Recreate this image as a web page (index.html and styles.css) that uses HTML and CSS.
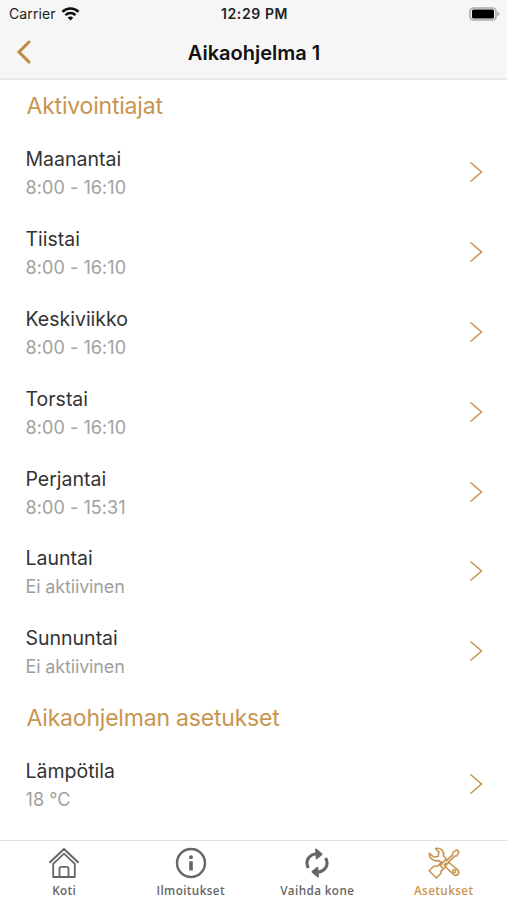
FILE: index.html
```html
<!DOCTYPE html>
<html lang="fi">
<head>
  <meta charset="UTF-8" />
  <meta name="viewport" content="width=device-width, initial-scale=1.0"/>
  <title>Aikaohjelma 1</title>
  <link rel="stylesheet" href="styles.css">
</head>
<body>
  <svg width="0" height="0" class="defs">
    <symbol id="chevron" viewBox="0 0 14 22">
      <path d="M1.5 1.5 L12.5 11 L1.5 20.5" fill="none" stroke="currentColor" stroke-width="1.6"/>
    </symbol>
  </svg>

  <header class="header">
    <div class="status-bar">
      <div class="carrier">
        <span>Carrier</span>
        <svg width="19" height="14" viewBox="0 0 18 14" fill="none" stroke="#111" stroke-width="2.6">
          <path d="M1 4.8 C5.3 .3 12.7 .3 17 4.8"/>
          <path d="M4 8.1 C6.7 5.3 11.3 5.3 14 8.1"/>
          <path d="M9 13.6 L6.2 10.7 C7.8 9.2 10.2 9.2 11.8 10.7 Z" fill="#111" stroke="none"/>
        </svg>
      </div>
      <span class="clock">12:29 PM</span>
      <svg class="battery" width="31" height="14" viewBox="0 0 31 14">
        <rect x="1" y="1" width="26" height="12" rx="3.6" fill="#f6f6f6" stroke="#aaa" stroke-width="1.6"/>
        <rect x="3" y="2.5" width="22" height="9" rx="1.5" fill="#000"/>
        <path d="M28.4 4.7 C31.2 5.8 31.2 8.2 28.4 9.3 Z" fill="#aaa"/>
      </svg>
    </div>
    <div class="nav-bar">
      <svg class="back" width="16" height="26" viewBox="0 0 16 26">
        <path d="M13 3 L3 13 L13 23" fill="none" stroke="currentColor" stroke-width="3" stroke-linecap="round"/>
      </svg>
      <h1>Aikaohjelma 1</h1>
    </div>
  </header>

  <main class="content">
    <h2>Aktivointiajat</h2>
    <ul class="list">
      <li class="row">
        <div><p class="name">Maanantai</p><p class="value">8:00 - 16:10</p></div>
        <svg class="chevron"><use href="#chevron"/></svg>
      </li>
      <li class="row">
        <div><p class="name">Tiistai</p><p class="value">8:00 - 16:10</p></div>
        <svg class="chevron"><use href="#chevron"/></svg>
      </li>
      <li class="row">
        <div><p class="name">Keskiviikko</p><p class="value">8:00 - 16:10</p></div>
        <svg class="chevron"><use href="#chevron"/></svg>
      </li>
      <li class="row">
        <div><p class="name">Torstai</p><p class="value">8:00 - 16:10</p></div>
        <svg class="chevron"><use href="#chevron"/></svg>
      </li>
      <li class="row">
        <div><p class="name">Perjantai</p><p class="value">8:00 - 15:31</p></div>
        <svg class="chevron"><use href="#chevron"/></svg>
      </li>
      <li class="row">
        <div><p class="name">Launtai</p><p class="value inactive">Ei aktiivinen</p></div>
        <svg class="chevron"><use href="#chevron"/></svg>
      </li>
      <li class="row">
        <div><p class="name">Sunnuntai</p><p class="value inactive">Ei aktiivinen</p></div>
        <svg class="chevron"><use href="#chevron"/></svg>
      </li>
    </ul>

    <h2>Aikaohjelman asetukset</h2>
    <ul class="list">
      <li class="row">
        <div><p class="name">Lämpötila</p><p class="value">18 °C</p></div>
        <svg class="chevron"><use href="#chevron"/></svg>
      </li>
    </ul>
  </main>

  <nav class="tab-bar">
    <a class="tab">
      <svg width="32" height="32" viewBox="0 0 32 32" fill="none" stroke="currentColor" stroke-width="1.8" stroke-linejoin="round">
        <path d="M1.5 15.7 L16 2 L30.5 15.7" stroke-width="2"/>
        <path d="M5.2 16.8 L16 6.6 L26.8 16.8 V30 H5.2 Z"/>
        <path d="M11.5 30 V21.5 Q11.5 19.8 13.2 19.8 H18.8 Q20.5 19.8 20.5 21.5 V30"/>
      </svg>
      <span>Koti</span>
    </a>
    <a class="tab">
      <svg width="32" height="32" viewBox="0 0 32 32">
        <circle cx="16" cy="16" r="14" fill="none" stroke="currentColor" stroke-width="2.4"/>
        <circle cx="16" cy="10.3" r="2" fill="currentColor"/>
        <path d="M16 14.2 V23.5" stroke="currentColor" stroke-width="3.6"/>
      </svg>
      <span>Ilmoitukset</span>
    </a>
    <a class="tab">
      <svg width="32" height="32" viewBox="0 0 32 32" fill="none" stroke="currentColor" stroke-width="3.1" stroke-linejoin="round">
        <path d="M7.4 21 C3.6 14 7.8 7.2 16.5 6.8"/>
        <path d="M24.6 11 C28.4 18 24.2 24.8 15.5 25.2"/>
        <path d="M15 2.4 L20.6 7.2 L15.6 11.4 Z" fill="currentColor" stroke-width="1.8"/>
        <path d="M17 29.6 L11.4 24.8 L16.4 20.6 Z" fill="currentColor" stroke-width="1.8"/>
      </svg>
      <span>Vaihda kone</span>
    </a>
    <a class="tab active">
      <svg width="32" height="32" viewBox="0 0 32 32" fill="none" stroke="currentColor" stroke-width="1.6" stroke-linejoin="round">
        <path d="M7.5 1.5 C12.5 .3 16.5 4 15.6 9 L18.3 11.8 L14 16.4 L11 13.6 C6 14.7 1 11.5 1.5 6.4 L5.8 10 L10.1 9.5 L10.9 5.1 Z"/>
        <path d="M14.2 16.3 L12.3 18.6 L15.5 21.8 L13 24.2 V26.2 L8.4 31 L1.2 23.7 L5.7 19.2 H9.6 L14 14.6"/>
        <path d="M17.9 14.4 L24.7 7.6 L25.2 5.1 L28.9 2.9 L31 5 L28.9 8.8 L26.3 9.4 L19.6 16.1"/>
        <path d="M18 18.2 L20.8 15.5 L29.5 22.6 C33 26.2 28.4 30.4 24.9 27 L17.1 19.2 Z"/>
        <circle cx="26.2" cy="24.2" r="1.5"/>
        <path d="M15.7 18.3 L18.3 15.8 M15 22 L17.5 20"/>
      </svg>
      <span>Asetukset</span>
    </a>
  </nav>
</body>
</html>
```

FILE: styles.css
```css
* {
  box-sizing: border-box;
  margin: 0;
  padding: 0;
}

body {
  height: 900px;
  display: flex;
  flex-direction: column;
  overflow: hidden;
  background: #fff;
  font-family: Inter, "Liberation Sans", sans-serif;
  color: #333;
}

.defs {
  position: absolute;
}

.header {
  height: 80px;
  flex: none;
  background: #f6f6f6;
  border-bottom: 2px solid #e9e9e9;
}

.status-bar {
  display: grid;
  grid-template-columns: 1fr auto 1fr;
  align-items: center;
  height: 27px;
  padding: 0 7px 0 9px;
  font-size: 14px;
  color: #222;
}

.carrier {
  display: flex;
  align-items: center;
  gap: 5px;
  letter-spacing: 0.1px;
}

.clock {
  font-weight: 600;
  letter-spacing: 0.6px;
}

.battery {
  justify-self: end;
}

.nav-bar {
  display: grid;
  grid-template-columns: 40px 1fr 40px;
  align-items: center;
  height: 50px;
}

.back {
  margin-left: 16px;
  color: #bf8a42;
}

h1 {
  padding: 1px 0 0 1px;
  text-align: center;
  font-size: 20px;
  font-weight: 600;
  letter-spacing: 0;
  color: #111;
}

.content {
  flex: 1;
  min-height: 0;
  margin-top: -0.8px;
}

h2 {
  height: 53.4px;
  padding-left: 26.5px;
  line-height: 55px;
  font-size: 23px;
  font-weight: 400;
  letter-spacing: -0.2px;
  color: #c8954f;
}

.list {
  list-style: none;
}

.row {
  display: flex;
  justify-content: space-between;
  align-items: center;
  height: 79.8px;
  padding: 0 24px 0 25.5px;
}

.name {
  padding-top: 3px;
  line-height: 28px;
  font-size: 19.5px;
  letter-spacing: 0;
}

.value {
  line-height: 29px;
  font-size: 18px;
  letter-spacing: 0.07px;
  color: #a0a0a0;
}

.inactive {
  letter-spacing: -0.15px;
}

.chevron {
  width: 14px;
  height: 22px;
  color: #c8954f;
}

.tab-bar {
  display: flex;
  flex: none;
  height: 60px;
  border-top: 1px solid #dedede;
  padding: 6px 0 0 1px;
}

.tab {
  flex: 1;
  display: flex;
  flex-direction: column;
  align-items: center;
  gap: 3px;
  font-family: "Open Sans", "Noto Sans", sans-serif;
  font-size: 11.7px;
  font-weight: 600;
  line-height: 16px;
  letter-spacing: 0.4px;
  color: #666;
}

.active {
  color: #c8954f;
}
```
